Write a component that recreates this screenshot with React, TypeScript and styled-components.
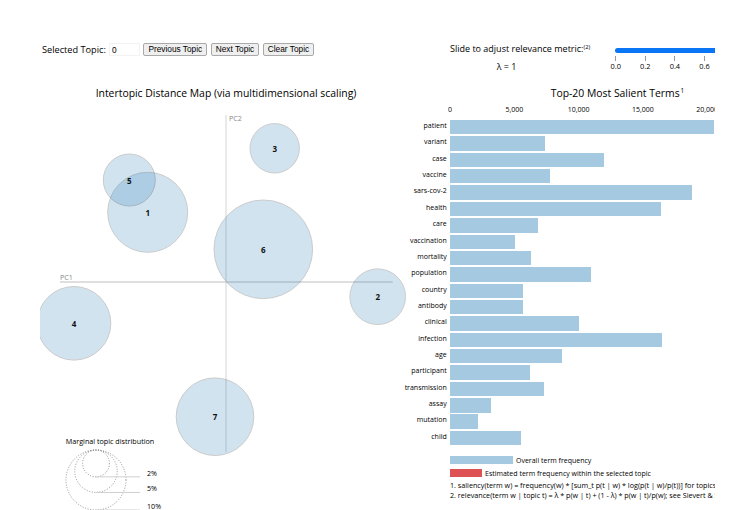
import React from "react";
import styled, { createGlobalStyle } from "styled-components";

const GlobalStyle = createGlobalStyle`
  html, body { margin: 0; padding: 0; background: #fff; }
  body { font-family: "Open Sans", "Noto Sans", sans-serif; color: #000; }
`;

/* ---------- data ---------- */

type Topic = { id: number; x: number; y: number; r: number };

const topics: Topic[] = [
  { id: 1, x: 107.7, y: 109.3, r: 40 },
  { id: 2, x: 337.7, y: 193.7, r: 27.8 },
  { id: 3, x: 234.7, y: 45.3, r: 24.7 },
  { id: 4, x: 34, y: 220.3, r: 36.8 },
  { id: 5, x: 89.3, y: 77, r: 26 },
  { id: 6, x: 223.3, y: 146.3, r: 49.3 },
  { id: 7, x: 175, y: 313.7, r: 38.8 },
];

const marginal = [2, 5, 10];

const terms: [string, number][] = [
  ["patient", 20530],
  ["variant", 7388],
  ["case", 12000],
  ["vaccine", 7753],
  ["sars-cov-2", 18843],
  ["health", 16432],
  ["care", 6866],
  ["vaccination", 5078],
  ["mortality", 6299],
  ["population", 10941],
  ["country", 5677],
  ["antibody", 5700],
  ["clinical", 10055],
  ["infection", 16486],
  ["age", 8733],
  ["participant", 6198],
  ["transmission", 7333],
  ["assay", 3212],
  ["mutation", 2201],
  ["child", 5498],
];

const TICK_STEP = 64.3;
const PX_PER_UNIT = TICK_STEP / 5000;
const axisTicks = [0, 5000, 10000, 15000, 20000];
const lambdaTicks = ["0.0", "0.2", "0.4", "0.6"];

/* ---------- page frame ---------- */

const Page = styled.div`
  margin-left: 40px;
  width: 675px;
  height: 510px;
  overflow: hidden;
  display: grid;
  grid-template-columns: 360px 315px;
  grid-template-rows: 83px 427px;
`;

/* ---------- topic controls ---------- */

const Controls = styled.div`
  padding-top: 43px;
  display: flex;
  align-items: center;
  height: 13.3px;
`;

const ControlLabel = styled.span`
  margin-left: 2px;
  font-size: 9.2px;
  line-height: 13px;
`;

const TopicInput = styled.input`
  box-sizing: border-box;
  width: 31px;
  height: 13.3px;
  margin: 0 0 0 3px;
  padding: 0 0 0 2px;
  border: 1px solid #f2f2f2;
  font-family: "Liberation Sans", Arial, sans-serif;
  font-size: 8.3px;
  outline: none;
`;

const ControlButton = styled.button`
  box-sizing: border-box;
  height: 13.3px;
  margin: 0 0 0 3.5px;
  padding: 0 4px;
  border: 1px solid #a9a9a9;
  border-radius: 2px;
  background: #efefef;
  font-family: "Liberation Sans", Arial, sans-serif;
  font-size: 8.3px;
  line-height: 11px;
  color: #000;
`;

/* ---------- relevance slider ---------- */

const SliderArea = styled.div`
  padding: 43px 0 0 50px;
  display: flex;
  align-items: flex-start;
`;

const SliderText = styled.div`
  width: 164.7px;
  flex: none;
`;

const SliderLabel = styled.div`
  font-size: 9px;
  line-height: 12px;
  white-space: nowrap;
`;

const Sup = styled.sup`
  font-size: 5.8px;
  vertical-align: 3px;
  line-height: 0;
`;

const TitleSup = styled(Sup)`
  font-size: 6.4px;
  vertical-align: 4px;
  margin-left: 1px;
`;

const LambdaValue = styled.div`
  margin: 6px 0 0 46.7px;
  font-size: 9px;
  line-height: 12px;
`;

const SliderBody = styled.div`
  padding-top: 4.5px;
  flex: none;
`;

const Track = styled.div`
  width: 140px;
  height: 5px;
  border-radius: 3px;
  background: #0a75f5;
`;

const TickRow = styled.div`
  display: flex;
  margin: 3.8px 0 0 -13.8px;
`;

const Tick = styled.div`
  width: 29.6px;
  display: flex;
  flex-direction: column;
  align-items: center;
`;

const TickMark = styled.div`
  width: 1px;
  height: 5px;
  background: #9a9a9a;
`;

const TickText = styled.div`
  margin-top: 0.5px;
  font-size: 7.4px;
  line-height: 9px;
`;

/* ---------- panels ---------- */

const Panel = styled.div`
  display: flex;
  flex-direction: column;
`;

const PanelTitle = styled.div<{ $indent: number }>`
  height: 20px;
  line-height: 20px;
  padding-left: ${(p) => p.$indent}px;
  font-size: 10.4px;
  white-space: nowrap;
`;

const CenteredTitle = styled(PanelTitle)`
  text-align: center;
`;

/* ---------- intertopic map ---------- */

const MapSvg = styled.svg`
  display: block;
  overflow: visible;
`;

const AxisLine = styled.line<{ $w: number }>`
  stroke: #d4d4d4;
  stroke-width: ${(p) => p.$w};
`;

const AxisName = styled.text`
  font-size: 7.2px;
  fill: #8a8a8a;
`;

const TopicCircle = styled.circle`
  fill: #1f77b4;
  stroke: #000;
  stroke-width: 1;
  opacity: 0.2;
`;

const TopicLabel = styled.text`
  font-size: 8px;
  font-weight: 700;
  text-anchor: middle;
  dominant-baseline: central;
  fill: #111;
`;

const MarginalTitle = styled.text`
  font-size: 7.2px;
  text-anchor: middle;
  dominant-baseline: central;
`;

const MarginalCircle = styled.circle`
  fill: none;
  stroke: #777;
  stroke-width: 0.8;
  stroke-dasharray: 1 1.6;
`;

const MarginalLine = styled.line`
  stroke: #cfcfcf;
  stroke-width: 1;
`;

const MarginalText = styled.text`
  font-size: 7.1px;
`;

/* ---------- salient terms ---------- */

const Axis = styled.div`
  display: flex;
  height: 14px;
  margin-left: ${50 - TICK_STEP / 2}px;
`;

const AxisTick = styled.div`
  flex: none;
  width: ${TICK_STEP}px;
  text-align: center;
  font-size: 7px;
  line-height: 14px;
`;

const BarList = styled.div`
  margin-top: 3px;
  display: flex;
  flex-direction: column;
`;

const BarRow = styled.div`
  display: grid;
  grid-template-columns: 50px 1fr;
  height: 16.37px;
  align-items: start;
`;

const TermName = styled.div`
  padding-right: 3.3px;
  text-align: right;
  font-size: 7px;
  line-height: 11px;
  white-space: nowrap;
`;

const Bar = styled.div`
  height: 14.4px;
  background: rgb(165, 201, 225);
`;

const Legend = styled.div`
  margin: 8.6px 0 0 50px;
  display: flex;
  flex-direction: column;
  gap: 4.3px;
`;

const LegendRow = styled.div`
  display: flex;
  align-items: center;
  gap: 3px;
  height: 8.7px;
`;

const Swatch = styled.div<{ $w: number; $color: string }>`
  width: ${(p) => p.$w}px;
  height: 8.7px;
  background: ${(p) => p.$color};
`;

const LegendText = styled.span`
  font-size: 7px;
  line-height: 9px;
  white-space: nowrap;
`;

const Notes = styled.div`
  margin: 3px 0 0 50px;
  font-size: 7.2px;
  line-height: 10px;
  white-space: nowrap;
`;

/* ---------- components ---------- */

function TopicControls() {
  return (
    <Controls>
      <ControlLabel>Selected Topic:</ControlLabel>
      <TopicInput type="text" defaultValue="0" />
      <ControlButton>Previous Topic</ControlButton>
      <ControlButton>Next Topic</ControlButton>
      <ControlButton>Clear Topic</ControlButton>
    </Controls>
  );
}

function RelevanceSlider() {
  return (
    <SliderArea>
      <SliderText>
        <SliderLabel>
          Slide to adjust relevance metric:<Sup>(2)</Sup>
        </SliderLabel>
        <LambdaValue>λ = 1</LambdaValue>
      </SliderText>
      <SliderBody>
        <Track />
        <TickRow>
          {lambdaTicks.map((t) => (
            <Tick key={t}>
              <TickMark />
              <TickText>{t}</TickText>
            </Tick>
          ))}
        </TickRow>
      </SliderBody>
    </SliderArea>
  );
}

function IntertopicMap() {
  const top = 347;
  return (
    <Panel>
      <CenteredTitle $indent={12}>
        Intertopic Distance Map (via multidimensional scaling)
      </CenteredTitle>
      <MapSvg width={360} height={407} viewBox="0 0 360 407">
        <AxisLine $w={1.5} x1={20} y1={179} x2={352.7} y2={179} />
        <AxisLine $w={1} x1={186} y1={12} x2={186} y2={349} />
        <AxisName x={189} y={17.7}>PC2</AxisName>
        <AxisName x={20} y={176.5}>PC1</AxisName>
        {topics.map((t) => (
          <TopicCircle key={t.id} cx={t.x} cy={t.y} r={t.r} />
        ))}
        {topics.map((t) => (
          <TopicLabel key={t.id} x={t.x} y={t.y}>
            {t.id}
          </TopicLabel>
        ))}
        <MarginalTitle x={70} y={338}>Marginal topic distribution</MarginalTitle>
        {marginal.map((p) => {
          const r = 30 * Math.sqrt(p / 10);
          return <MarginalCircle key={p} cx={56} cy={top + r} r={r} />;
        })}
        {marginal.map((p) => {
          const r = 30 * Math.sqrt(p / 10);
          const y = top + 2 * r;
          return (
            <g key={p}>
              <MarginalLine x1={56} y1={y} x2={100} y2={y} />
              <MarginalText x={107} y={y - 1.2}>{p}%</MarginalText>
            </g>
          );
        })}
      </MapSvg>
    </Panel>
  );
}

function SalientTerms() {
  return (
    <Panel>
      <PanelTitle $indent={150.7}>
        Top-20 Most Salient Terms<TitleSup>1</TitleSup>
      </PanelTitle>
      <Axis>
        {axisTicks.map((v) => (
          <AxisTick key={v}>{v.toLocaleString("en-US")}</AxisTick>
        ))}
      </Axis>
      <BarList>
        {terms.map(([term, value]) => (
          <BarRow key={term}>
            <TermName>{term}</TermName>
            <Bar style={{ width: `${value * PX_PER_UNIT}px` }} />
          </BarRow>
        ))}
      </BarList>
      <Legend>
        <LegendRow>
          <Swatch $w={63} $color="rgb(165, 201, 225)" />
          <LegendText>Overall term frequency</LegendText>
        </LegendRow>
        <LegendRow>
          <Swatch $w={32} $color="rgb(222, 82, 83)" />
          <LegendText>Estimated term frequency within the selected topic</LegendText>
        </LegendRow>
      </Legend>
      <Notes>
        <div>
          1. saliency(term w) = frequency(w) * [sum_t p(t | w) * log(p(t | w)/p(t))] for topics t; see Chuang et. al (2012)
        </div>
        <div>
          2. relevance(term w | topic t) = λ * p(w | t) + (1 - λ) * p(w | t)/p(w); see Sievert &amp; Shirley (2014)
        </div>
      </Notes>
    </Panel>
  );
}

export default function App() {
  return (
    <>
      <GlobalStyle />
      <Page>
        <TopicControls />
        <RelevanceSlider />
        <IntertopicMap />
        <SalientTerms />
      </Page>
    </>
  );
}
